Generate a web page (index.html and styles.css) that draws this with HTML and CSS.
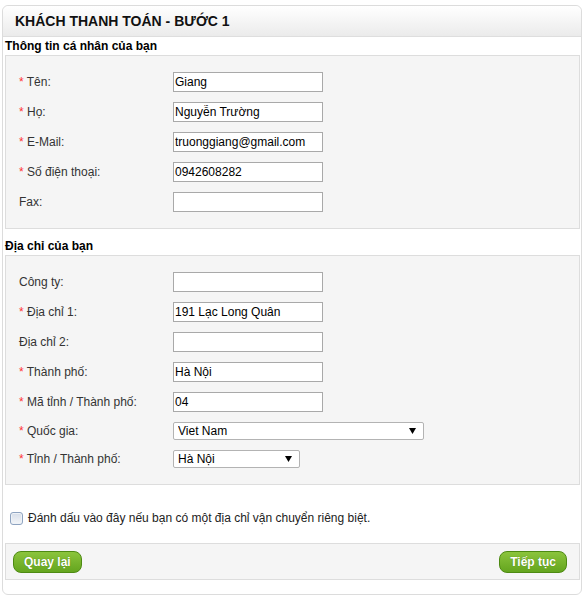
FILE: index.html
```html
<!DOCTYPE html>
<html lang="vi">
<head>
<meta charset="utf-8">
<title>Khách thanh toán - Bước 1</title>
<link rel="stylesheet" href="styles.css">
</head>
<body>
<div class="checkout">
  <div class="checkout-head">KHÁCH THANH TOÁN - BƯỚC 1</div>
  <div class="checkout-body">
    <div class="section-title">Thông tin cá nhân của bạn</div>
    <div class="fields">
      <div class="row"><label class="lbl"><span class="req">*</span> Tên:</label><input class="txt" type="text" value="Giang"></div>
      <div class="row"><label class="lbl"><span class="req">*</span> Họ:</label><input class="txt" type="text" value="Nguyễn Trường"></div>
      <div class="row"><label class="lbl"><span class="req">*</span> E-Mail:</label><input class="txt" type="text" value="truonggiang@gmail.com"></div>
      <div class="row"><label class="lbl"><span class="req">*</span> Số điện thoại:</label><input class="txt" type="text" value="0942608282"></div>
      <div class="row"><label class="lbl">Fax:</label><input class="txt" type="text" value=""></div>
    </div>

    <div class="section-title second">Địa chỉ của bạn</div>
    <div class="fields">
      <div class="row"><label class="lbl">Công ty:</label><input class="txt" type="text" value=""></div>
      <div class="row"><label class="lbl"><span class="req">*</span> Địa chỉ 1:</label><input class="txt" type="text" value="191 Lạc Long Quân"></div>
      <div class="row"><label class="lbl">Địa chỉ 2:</label><input class="txt" type="text" value=""></div>
      <div class="row"><label class="lbl"><span class="req">*</span> Thành phố:</label><input class="txt" type="text" value="Hà Nội"></div>
      <div class="row"><label class="lbl"><span class="req">*</span> Mã tỉnh / Thành phố:</label><input class="txt" type="text" value="04"></div>
      <div class="row"><label class="lbl"><span class="req">*</span> Quốc gia:</label>
        <span class="sel-wrap wide"><select class="sel"><option>Viet Nam</option></select><svg class="arrow" width="7" height="6" viewBox="0 0 7 6"><path d="M0 0H7L3.5 6Z" fill="#000"/></svg></span>
      </div>
      <div class="row"><label class="lbl"><span class="req">*</span> Tỉnh / Thành phố:</label>
        <span class="sel-wrap narrow"><select class="sel"><option>Hà Nội</option></select><svg class="arrow" width="7" height="6" viewBox="0 0 7 6"><path d="M0 0H7L3.5 6Z" fill="#000"/></svg></span>
      </div>
    </div>

    <label class="ship"><input class="chk" type="checkbox"><span>Đánh dấu vào đây nếu bạn có một địa chỉ vận chuyển riêng biệt.</span></label>

    <div class="buttons">
      <a class="btn" href="#">Quay lại</a>
      <a class="btn" href="#">Tiếp tục</a>
    </div>
  </div>
</div>
</body>
</html>
```
FILE: styles.css
```css
* { box-sizing: border-box; }
html, body { margin: 0; padding: 0; background: #fff; }
body {
  font-family: "Liberation Sans", Arial, sans-serif;
  font-size: 12px;
  color: #222;
}
.checkout {
  width: 580px;
  margin: 5px 0 0 2px;
  border: 1px solid #dcdcdc;
  border-radius: 6px;
  background: #fff;
}
.checkout-head {
  height: 31px;
  padding-left: 12px;
  line-height: 30px;
  font-size: 14px;
  font-weight: bold;
  color: #111;
  border-bottom: 1px solid #dedede;
  border-radius: 6px 6px 0 0;
  background: linear-gradient(#ffffff, #ebebeb);
}
.checkout-body {
  padding: 0 1px 14px 2px;
}
.section-title {
  height: 18px;
  line-height: 18px;
  font-weight: bold;
  color: #000;
}
.section-title.second { margin-top: 8px; }
.fields {
  border: 1px solid #dddddd;
  background: #f5f5f5;
  padding: 11px 0 11px 13px;
}
.row {
  display: flex;
  align-items: center;
  padding: 5px 0;
}
.lbl {
  width: 154px;
  flex: none;
  color: #333;
}
.req { color: #f33; }
.txt {
  width: 150px;
  height: 20px;
  margin: 0;
  padding: 0 1px;
  border: 1px solid #a9a9a9;
  background: #fff;
  font-family: "Liberation Sans", Arial, sans-serif;
  font-size: 12px;
  color: #000;
  outline: none;
}
.sel-wrap {
  position: relative;
  display: inline-block;
  height: 18px;
}
.sel-wrap.wide { width: 251px; }
.sel-wrap.narrow { width: 127px; }
.sel {
  -webkit-appearance: none;
  appearance: none;
  width: 100%;
  height: 18px;
  margin: 0;
  padding: 0 0 0 4px;
  border: 1px solid #b3b3b3;
  border-radius: 2px;
  background: #fff;
  font-family: "Liberation Sans", Arial, sans-serif;
  font-size: 12px;
  line-height: 16px;
  color: #000;
  outline: none;
}
.arrow {
  position: absolute;
  right: 8px;
  top: 6px;
  pointer-events: none;
}
.ship {
  display: flex;
  align-items: center;
  height: 18px;
  margin: 24px 0 16px 0;
  padding-left: 5px;
  color: #222;
}
.chk {
  -webkit-appearance: none;
  appearance: none;
  width: 13px;
  height: 13px;
  margin: 0 5px 0 0;
  border: 1px solid #8ea3c0;
  border-radius: 3px;
  background: linear-gradient(#d6dde8, #f4f6f9);
  box-shadow: inset 0 0 0 1px #eef2f7;
}
.buttons {
  display: flex;
  justify-content: space-between;
  align-items: center;
  border: 1px solid #dddddd;
  background: #f5f5f5;
  padding: 7px 12px 6px 7px;
}
.btn {
  display: inline-block;
  height: 22px;
  line-height: 20px;
  padding: 0 10px;
  border: 1px solid #4d8a12;
  border-radius: 8px;
  background: linear-gradient(#8bc43c, #64a51e);
  color: #fff;
  font-weight: bold;
  font-size: 12px;
  text-decoration: none;
  text-shadow: 0 0 1px #4a7a10;
}
```
